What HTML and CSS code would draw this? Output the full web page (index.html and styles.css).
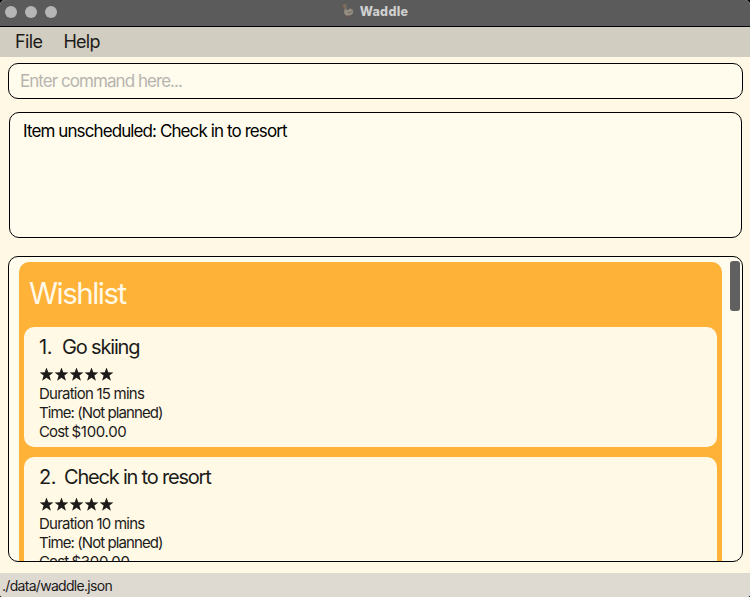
FILE: index.html
```html
<!DOCTYPE html>
<html lang="en">
<head>
<meta charset="utf-8">
<title>Waddle</title>
<link rel="stylesheet" href="styles.css">
</head>
<body>
<div class="window">
  <header class="titlebar">
    <div class="lights"><i></i><i></i><i></i></div>
    <div class="title">
      <svg class="goose" viewBox="0 0 12 14"><path d="M4.500 11l.7 1.700M6.500 11.500l-1.500 1.500" stroke="#91543e" stroke-width="1"/><path d="M1.500 .7C3-.1 4.300.6 4.300 2.200L4.400 5.800C6 6.500 7.500 4.400 8.500 4.200L8.900 5.300L10.500 5.200L10.400 6.300L11.300 6.500C11.500 9.500 9.500 11.500 6.500 11.600C3.400 11.700 1.900 10 2.200 7.600L2.800 4Z" fill="#968d81"/><path d="M1.500 .7C3-.1 4.300.6 4.300 2.200L4.300 5.200L2.700 4.800L2.600 2.800L1.100 2.200Z" fill="#7c6957"/><path d="M1.500 1L.1 2.400L1.700 2.700Z" fill="#9a6a50"/><path d="M6 8.500C8 9 9.500 8 10.500 7" fill="none" stroke="#746b62"/></svg>
      <span>Waddle</span>
    </div>
  </header>
  <nav class="menu"><span class="file">File</span><span class="help">Help</span></nav>
  <main>
    <div class="command"><span>Enter command here...</span></div>
    <div class="result"><span>Item unscheduled: Check in to resort</span></div>
    <div class="list">
      <section class="day">
        <h1><span>Wishlist</span></h1>
        <article class="card">
          <h2><span class="num">1.</span><span class="go">Go skiing</span></h2>
          <div class="stars"><svg viewBox="0 0 75 14"><defs><path id="star" d="M7.500 .2L9.300 4.900L14.400 5L10.400 8.200L11.900 13.300L7.500 10.400L3.100 13.300L4.600 8.200L.6 5L5.700 4.900Z"/></defs><use href="#star"/><use href="#star" x="15"/><use href="#star" x="30"/><use href="#star" x="45"/><use href="#star" x="60"/></svg></div>
          <p class="duration">Duration 15 mins</p>
          <p class="time">Time: (Not planned)</p>
          <p class="cost"><span>Cost </span>$100.00</p>
        </article>
        <article class="card">
          <h2><span class="num two">2.</span><span class="check">Check in to resort</span></h2>
          <div class="stars"><svg viewBox="0 0 75 14"><use href="#star"/><use href="#star" x="15"/><use href="#star" x="30"/><use href="#star" x="45"/><use href="#star" x="60"/></svg></div>
          <p class="duration">Duration 10 mins</p>
          <p class="time">Time: (Not planned)</p>
          <p class="cost"><span>Cost </span>$300.00</p>
        </article>
      </section>
      <div class="thumb"></div>
    </div>
  </main>
  <footer class="status"><span>./data/waddle.json</span></footer>
</div>
</body>
</html>
```
FILE: styles.css
```css
* { box-sizing: border-box; }
body { margin: 0; background: #000; font-family: Inter, "Liberation Sans", sans-serif; color: #1c1b1a; }
h1, h2, p { margin: 0; font-weight: 400; }
.window { width: 750px; height: 597px; display: flex; flex-direction: column; background: #fff8e5; overflow: hidden; border-radius: 5px 5px 3px 3px; }
.titlebar { height: 27px; flex: none; display: grid; grid-template-columns: 1fr auto 1fr; background: #5b5b5b; border-bottom: 1px solid #000; }
.lights { display: flex; gap: 8px; padding: 6px 0 0 5px; }
.lights i { width: 12px; height: 12px; border-radius: 50%; background: #b6b6b6; }
.title { display: flex; gap: 6px; font-size: 12.5px; font-weight: 800; line-height: 24px; color: #cfcfcf; letter-spacing: 0.3px; }
.goose { width: 12px; height: 14px; margin-top: 4px; }
.menu { height: 30px; flex: none; display: flex; gap: 21px; padding-left: 15px; background: #d2cdc1; font-size: 18px; line-height: 30px; }
.file { letter-spacing: -0.6px; }
.help { letter-spacing: -0.75px; }
main { flex: 1; display: flex; flex-direction: column; padding: 6px 7px 11px 8px; }
.command, .result, .list { border: 1px solid #000; border-radius: 10px; background: #fffcee; }
.command { height: 36px; padding-left: 11px; font-size: 17px; line-height: 35px; letter-spacing: -0.95px; color: #b7b4ae; }
.result { height: 126px; margin: 13px 1px 18px; padding: 7px 13px; font-size: 17px; line-height: 23px; letter-spacing: -0.9px; color: #000; }
.list { height: 306px; display: flex; align-items: flex-start; gap: 8px; padding: 4px 2px 0 10px; overflow: hidden; }
.day { width: 703px; height: 340px; flex: none; margin-top: 1px; padding: 0 5px; border-radius: 10px; background: #ffb238; }
.day h1 { height: 65px; padding-left: 5px; font-size: 29.5px; font-weight: 400; line-height: 62px; letter-spacing: -1.5px; color: #fff9e8; }
.card { height: 120px; margin-bottom: 10px; padding: 6px 15px 0; border-radius: 10px; background: #fff9e5; }
.card h2 { display: flex; height: 29px; gap: 10px; font-size: 20px; line-height: 29px; letter-spacing: -0.5px; }
.go { letter-spacing: -1.15px; }
.num.two { margin-right: -2px; }
.check { letter-spacing: -1.2px; }
.stars { height: 17px; }
.stars svg { display: block; width: 75px; height: 14px; fill: #1c1b1a; transform: translateY(5.4px); }
.card p { height: 19px; font-size: 15px; line-height: 19px; letter-spacing: -0.5px; }
.card .duration { letter-spacing: -0.77px; }
.card .time { letter-spacing: -0.92px; }
.card .cost { letter-spacing: -0.3px; }
.card .cost span { letter-spacing: -0.9px; }
.card .stars + p { margin-top: 5px; }
.thumb { width: 10px; height: 50px; flex: none; border-radius: 3px; background: #606060; }
.status { height: 24px; flex: none; padding-left: 2px; background: #dedad2; font-size: 14px; line-height: 25px; letter-spacing: -0.7px; }
```
